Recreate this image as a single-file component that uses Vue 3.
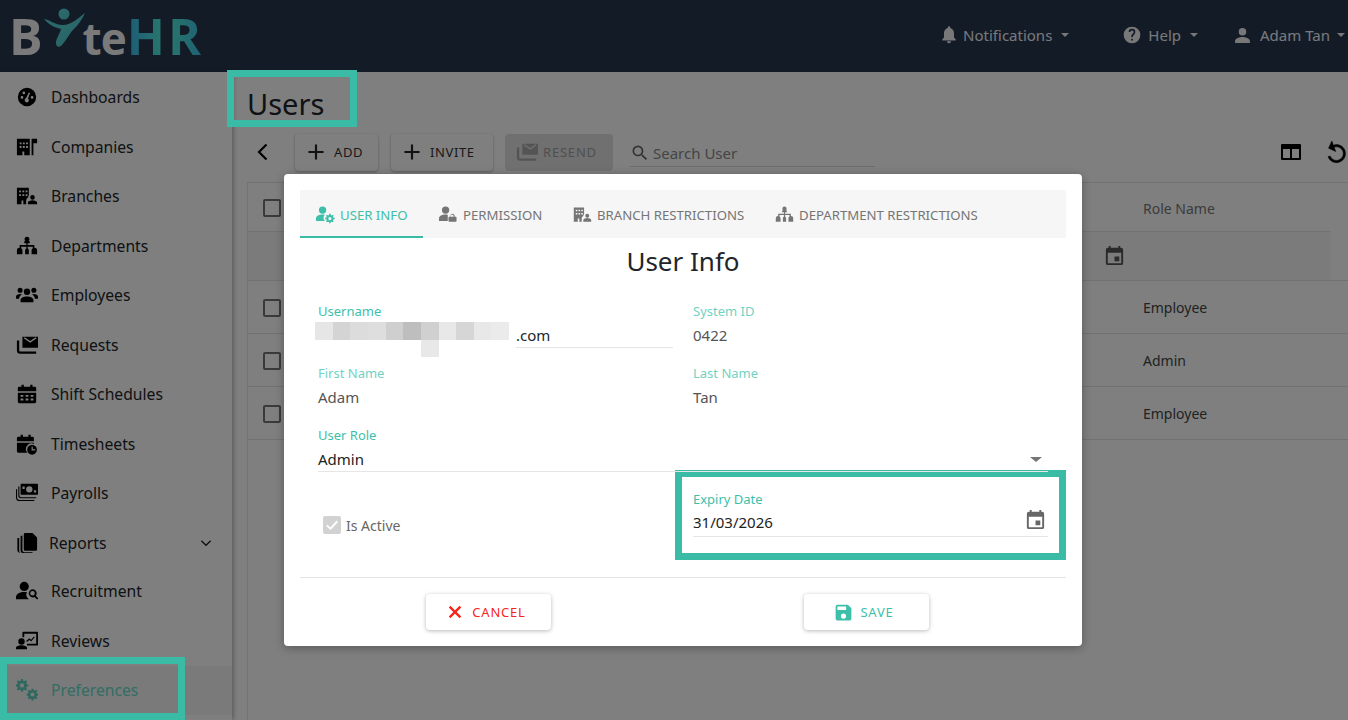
<script setup>
function gear(cx, cy, r, n = 8) {
  const pts = []
  const step = (Math.PI * 2) / n
  for (let i = 0; i < n; i++) {
    const a = i * step
    const list = [
      [a - step * 0.34, r * 0.76], [a - step * 0.18, r], [a + step * 0.18, r], [a + step * 0.34, r * 0.76],
    ]
    for (const [t, d] of list) pts.push(`${(cx + Math.cos(t) * d).toFixed(2)} ${(cy + Math.sin(t) * d).toFixed(2)}`)
  }
  const h = r * 0.34
  return `M${pts.join('L')}zM${cx - h} ${cy}a${h} ${h} 0 1 0 ${2 * h} 0a${h} ${h} 0 1 0 ${-2 * h} 0z`
}
const P = {
  dash: 'M12 2a10 10 0 1 0 0 20 10 10 0 0 0 0-20zM6.500 14a1.500 1.500 0 1 1 0-3 1.500 1.500 0 0 1 0 3zM8.500 9a1.500 1.500 0 1 1 0-3 1.500 1.500 0 0 1 0 3zm3.500 9a2.500 2.500 0 0 1-1-4.800L14 7l1.400.5-2.400 6a2.500 2.500 0 0 1-1 4.500zm5.500-4a1.500 1.500 0 1 1 0-3 1.500 1.500 0 0 1 0 3z',
  company: 'M1 21V3h14v18H9v-4H7v4zm3-14v2h2V7zm3.500 0v2h2V7zm3.500 0v2h2V7zM4 11v2h2v-2zm3.500 0v2h2v-2zm3.500 0v2h2v-2zM17 3h6v5h-4v13h-2z',
  branch: 'M1 21V3h13v8.500a4 4 0 0 0-1 2.500c-1.500.7-2 2-2 4v3H8v-4H6v4zM3.500 6v2h2V6zM7 6v2h2V6zm3.500 0v2h2V6zm-7 4v2h2v-2zM7 10v2h2v-2zm3.500 0v2h2v-2zM18 11a2.500 2.500 0 1 1 0 5 2.500 2.500 0 0 1 0-5zm-5 10v-2c0-1.500 3-2.500 5-2.500s5 1 5 2.500v2z',
  dept: 'M12 2a2.700 2.700 0 0 1 2.700 2.700c0 .9-.4 1.600-1 2.100H15V9h-2.300v2H20v3h.2a2.800 2.800 0 0 1 2.800 2.800V21h-6v-4.200c0-1 .5-1.900 1.300-2.400v-1.700h-5.600v1.700c.8.500 1.300 1.400 1.300 2.400V21H10v-4.200c0-1 .5-1.900 1.300-2.400v-1.700H5.700v1.700c.8.500 1.300 1.400 1.300 2.400V21H1v-4.200A2.800 2.800 0 0 1 3.800 14H4v-3h7.300V9H9V6.800h1.300c-.6-.5-1-1.200-1-2.100A2.700 2.700 0 0 1 12 2z',
  emp: 'M12 5a3.500 3.500 0 1 1 0 7 3.500 3.500 0 0 1 0-7zM4.500 4a2.800 2.800 0 1 1 0 5.600 2.800 2.800 0 0 1 0-5.600zm15 0a2.800 2.800 0 1 1 0 5.600 2.800 2.800 0 0 1 0-5.600zM5 20v-2.500C5 15 8 13.500 12 13.500s7 1.500 7 4V20zM0 16v-2c0-2 2-3 5-3l1.500.5C4.500 12.500 3.500 14 3.500 16zm24 0h-3.500c0-2-1-3.500-3-4.500L19 11c3 0 5 1 5 3z',
  req: 'M7 3h17v12H7zm1.500 1.500 7 5 7-5-1-1-6 4.200-6-4.200zM1 7h2.500v11a1 1 0 0 0 1 1H22v2.500H4.500A3.500 3.500 0 0 1 1 18z',
  cal: 'M6 2h2.500v2h7V2H18v2h2.500A1.500 1.500 0 0 1 22 5.500V9H2V5.500A1.500 1.500 0 0 1 3.500 4H6zM2 10.500h20v10a1.500 1.500 0 0 1-1.500 1.500h-17A1.500 1.500 0 0 1 2 20.500zM5 13v2h3v-2zm5.500 0v2h3v-2zm5.500 0v2h3v-2zM5 17v2h3v-2zm5.500 0v2h3v-2zm5.500 0v2h3v-2z',
  time: 'M5 2h2.500v2h6V2H16v2h2a1.500 1.500 0 0 1 1.500 1.500V9H1V5.500A1.500 1.500 0 0 1 2.500 4H5zM1 10.500h18.500V12a6 6 0 0 0-7 9.500h-10A1.500 1.500 0 0 1 1 20zM17.500 13a5.300 5.300 0 1 1 0 10.600 5.300 5.300 0 0 1 0-10.600zM17 15v4h4v-1.300h-2.700V15z',
  pay: 'M6 2h17a1 1 0 0 1 1 1v10a1 1 0 0 1-1 1H6a1 1 0 0 1-1-1V3a1 1 0 0 1 1-1zm8.500 2.500a3.500 3.500 0 1 0 0 7 3.500 3.500 0 0 0 0-7zM7 5v2.500h2.500V5zm12.500 4v2.500H22V9zM2.500 5h1.200v9.500a2 2 0 0 0 2 2H22v1.300H5.500a3 3 0 0 1-3-3zM0 8h1.200v8.500a3 3 0 0 0 3 3H20v1.300H4a4 4 0 0 1-4-4z',
  rep: 'M10 1h8l5 5v13a1.500 1.500 0 0 1-1.500 1.500H10A1.500 1.500 0 0 1 8.500 19V2.500A1.500 1.500 0 0 1 10 1zM5 4h2v16a2 2 0 0 0 2 2h9v1H7.500A2.500 2.500 0 0 1 5 20.500zM1.500 6.500h2V21a1.500 1.500 0 0 0 1.500 1.500H4A2.500 2.500 0 0 1 1.500 20z',
  rec: 'M9 2a5 5 0 1 1 0 10A5 5 0 0 1 9 2zM0 21v-2.500C0 15 4.500 13 9 13c1 0 2 .1 3 .3a6 6 0 0 0 2 7.700zM18 10a4.500 4.500 0 0 1 3.600 7.200L24.400 20 23 21.400l-2.800-2.800A4.500 4.500 0 1 1 18 10zm0 2a2.500 2.500 0 1 0 0 5 2.500 2.500 0 0 0 0-5z',
  rev: 'M8 2h15a1 1 0 0 1 1 1v13a1 1 0 0 1-1 1H12v-2h10V4H9v4H7V3a1 1 0 0 1 1-1zM6 9a3.500 3.500 0 1 1 0 7 3.500 3.500 0 0 1 0-7zM0 21v-1.500C0 17.500 3 16.500 6 16.500s6 1 6 3V21zm11-9 3.500-3 2 1.500 3-3.500 1 1-4 4.500-2-1.500-2.500 2z',
  gears: gear(6.500, 7, 7) + gear(18, 17, 6.500),
  userGear: 'M9 2a5 5 0 1 1 0 10A5 5 0 0 1 9 2zM0 22v-3.500C0 15 4.500 13 9 13c1 0 2 .1 3 .3a6.500 6.500 0 0 0 .3 8.700z' + gear(19, 18.500, 6.500),
  userLock: 'M9 2a5 5 0 1 1 0 10A5 5 0 0 1 9 2zM0 22v-3.500C0 15 4.500 13 9 13c1 0 2.100.1 3 .3V22zM18 12a3.500 3.500 0 0 1 3.500 3.500V16H23a1 1 0 0 1 1 1v5a1 1 0 0 1-1 1h-9a1 1 0 0 1-1-1v-5a1 1 0 0 1 1-1h1.500v-.5A3.500 3.500 0 0 1 18 12zm0 1.500a2 2 0 0 0-2 2v.5h4v-.5a2 2 0 0 0-2-2z',
  bell: 'M12 22a2.500 2.500 0 0 0 2.500-2.500h-5A2.500 2.500 0 0 0 12 22zm8-5-2-2v-5c0-3-1.600-5.600-4.500-6.300V3a1.500 1.500 0 0 0-3 0v.7C7.600 4.400 6 7 6 10v5l-2 2v1.500h16z',
  help: 'M12 2a10 10 0 1 0 0 20 10 10 0 0 0 0-20zm1 16.500h-2v-2h2zm2-7.500-.9.9c-.7.7-1.100 1.300-1.100 2.600h-2V14c0-1.100.4-2.100 1.100-2.800l1.200-1.300c.4-.3.700-.8.700-1.400a2 2 0 0 0-4 0H8a4 4 0 0 1 8 0c0 .9-.4 1.700-1 2.500z',
  person: 'M12 3.500a4.300 4.300 0 1 1 0 8.600 4.300 4.300 0 0 1 0-8.600zM3.500 20.500v-2.200c0-3 5.700-4.500 8.500-4.500s8.500 1.500 8.500 4.500v2.200z',
  calOut: 'M19 4h-1V2h-2v2H8V2H6v2H5a2 2 0 0 0-2 2v14a2 2 0 0 0 2 2h14a2 2 0 0 0 2-2V6a2 2 0 0 0-2-2zm0 16H5V9h14zm-7-7h5v5h-5z',
  mail: 'M7 3h17v12H7zm1.500 1.500 7 5 7-5-1-1-6 4.200-6-4.200zM1 7h2.500v11a1 1 0 0 0 1 1H22v2.500H4.500A3.500 3.500 0 0 1 1 18z',
  save: 'M17 3H5a2 2 0 0 0-2 2v14a2 2 0 0 0 2 2h14a2 2 0 0 0 2-2V7zm-5 16a3 3 0 1 1 0-6 3 3 0 0 1 0 6zm3-10H5V5h10z',
  cols: 'M3 4h18a1 1 0 0 1 1 1v14a1 1 0 0 1-1 1H3a1 1 0 0 1-1-1V5a1 1 0 0 1 1-1zm1 5v9h7V9zm9 0v9h7V9z',
  undo: 'M12 5V1L7 6l5 5V7c3.310 0 6 2.690 6 6s-2.690 6-6 6-6-2.690-6-6H4c0 4.420 3.580 8 8 8s8-3.580 8-8-3.580-8-8-8z',
  search: 'M15.500 14h-.79l-.28-.27A6.470 6.470 0 0 0 16 9.500 6.500 6.500 0 1 0 9.500 16c1.610 0 3.090-.59 4.230-1.570l.27.28v.79l5 4.990L20.490 19l-4.990-5zm-6 0C7.010 14 5 11.990 5 9.500S7.010 5 9.500 5 14 7.010 14 9.500 11.990 14 9.500 14z',
  plus: 'M19 13h-6v6h-2v-6H5v-2h6V5h2v6h6v2z',
}

const nav = [
  { label: 'Dashboards', icon: P.dash },
  { label: 'Companies', icon: P.company },
  { label: 'Branches', icon: P.branch },
  { label: 'Departments', icon: P.dept },
  { label: 'Employees', icon: P.emp },
  { label: 'Requests', icon: P.req },
  { label: 'Shift Schedules', icon: P.cal },
  { label: 'Timesheets', icon: P.time },
  { label: 'Payrolls', icon: P.pay },
  { label: 'Reports', icon: P.rep, more: true },
  { label: 'Recruitment', icon: P.rec },
  { label: 'Reviews', icon: P.rev },
  { label: 'Preferences', icon: P.gears, active: true },
]
const tabs = [
  { label: 'USER INFO', icon: P.userGear, active: true },
  { label: 'PERMISSION', icon: P.userLock },
  { label: 'BRANCH RESTRICTIONS', icon: P.branch },
  { label: 'DEPARTMENT RESTRICTIONS', icon: P.dept },
]
const rows = ['Employee', 'Admin', 'Employee']
const blur = [
  ['#e6e6e6', 18], ['#d4d4d4', 17], ['#dcdcdc', 18], ['#dedede', 18], ['#cfcfcf', 17],
  ['#bebebe', 18], ['#d0d0d0', 18], ['#e8e8e8', 17], ['#d6d6d6', 18], ['#e8e8e8', 17], ['#ebebeb', 18],
]
</script>

<template>
  <div class="page">
    <header class="top">
      <div class="logo">
        <span class="lg-b">B</span>
        <svg class="lg-y" viewBox="0 0 42 42" width="42" height="42">
          <defs>
            <linearGradient id="lgy" x1="0" y1="0" x2="1" y2="1">
              <stop offset="0" stop-color="#58d8dc" />
              <stop offset="1" stop-color="#50c8c8" />
            </linearGradient>
          </defs>
          <circle cx="20" cy="6" r="5.500" fill="url(#lgy)" />
          <path d="M0 11c6 1 11 6 19 6s14-6 22-12c-4 9-9 14-13 18-4 5-7 11-11 15-3 2-5 0-5-3 0-5 4-9 5-14C12 20 5 17 0 11z" fill="url(#lgy)" />
        </svg>
        <span class="lg-te">te</span>
        <span class="lg-hr">HR</span>
      </div>
      <div class="top-menu">
        <span class="top-item n"><svg viewBox="0 0 24 24" width="20" height="20"><path :d="P.bell" /></svg>Notifications<i class="caret"></i></span>
        <span class="top-item h"><svg viewBox="0 0 24 24" width="20" height="20"><path :d="P.help" /></svg>Help<i class="caret"></i></span>
        <span class="top-item u"><svg viewBox="0 0 24 24" width="21" height="21"><path :d="P.person" /></svg>Adam Tan<i class="caret"></i></span>
      </div>
    </header>

    <div class="body">
      <aside class="side">
        <div v-for="n in nav" :key="n.label" class="nav" :class="{ active: n.active, more: n.more }">
          <svg viewBox="0 0 24 24" width="22" height="22"><path :d="n.icon" /></svg>
          <span>{{ n.label }}</span>
          <svg v-if="n.more" class="chev" viewBox="0 0 24 24" width="16" height="16"><path d="M5 8.500 12 15.500 19 8.500" fill="none" stroke="currentColor" stroke-width="2" /></svg>
        </div>
      </aside>

      <main class="main">
        <h1 class="title">Users</h1>
        <div class="toolbar">
          <svg class="back" viewBox="0 0 24 24" width="24" height="24"><path d="M15.500 4.500 8 12l7.500 7.500" fill="none" stroke="#000" stroke-width="2.200" /></svg>
          <button class="tbtn add"><svg viewBox="0 0 24 24" width="26" height="26"><path :d="P.plus" /></svg>ADD</button>
          <button class="tbtn inv"><svg viewBox="0 0 24 24" width="26" height="26"><path :d="P.plus" /></svg>INVITE</button>
          <button class="tbtn res"><svg viewBox="0 0 24 24" width="22" height="22"><path :d="P.mail" /></svg>RESEND</button>
          <div class="search">
            <svg viewBox="0 0 24 24" width="20" height="20"><path :d="P.search" /></svg>
            <span>Search User</span>
          </div>
          <div class="tools">
            <svg viewBox="0 0 24 24" width="24" height="24"><path :d="P.cols" /></svg>
            <svg viewBox="0 0 24 24" width="27" height="27"><path :d="P.undo" transform="rotate(-20 12 13)" stroke="#000" stroke-width=".4" /></svg>
          </div>
        </div>
        <div class="table">
          <div class="tr th"><i class="cb"></i><span class="role">Role Name</span></div>
          <div class="tr filter">
            <svg viewBox="0 0 24 24" width="23" height="23"><path :d="P.calOut" /></svg>
          </div>
          <div v-for="(r, i) in rows" :key="i" class="tr data"><i class="cb"></i><span class="role">{{ r }}</span></div>
        </div>
      </main>
    </div>

    <div class="overlay"></div>
    <i class="mark mark-title"></i>
    <i class="mark mark-pref"></i>

    <section class="dialog">
      <nav class="tabs">
        <div v-for="t in tabs" :key="t.label" class="tab" :class="{ on: t.active }">
          <svg :viewBox="t.icon === P.branch || t.icon === P.dept ? '0 0 24 24' : '0 0 26 26'" width="19" height="19"><path :d="t.icon" /></svg>
          <span>{{ t.label }}</span>
        </div>
      </nav>
      <h2 class="dtitle">User Info</h2>

      <div class="form">
        <div class="field user">
          <label>Username</label>
          <div class="blur">
            <div class="blur-row"><i v-for="(b, i) in blur" :key="i" class="px" :style="{ background: b[0], width: b[1] + 'px' }"></i></div>
            <i class="blur-drop"></i>
          </div>
          <div class="value line">.com</div>
        </div>
        <div class="field">
          <label>System ID</label>
          <div class="value muted">0422</div>
        </div>
        <div class="field">
          <label>First Name</label>
          <div class="value muted">Adam</div>
        </div>
        <div class="field">
          <label>Last Name</label>
          <div class="value muted">Tan</div>
        </div>
        <div class="field span">
          <label>User Role</label>
          <div class="value line dark">Admin<i class="sel"></i></div>
        </div>
        <div class="active-row">
          <i class="check"><svg viewBox="0 0 24 24" width="18" height="18"><path d="M5 12.500 10 17 19 7" fill="none" stroke="#fff" stroke-width="2.500" /></svg></i>
          <span>Is Active</span>
        </div>
        <div class="expiry">
          <div class="field">
            <label>Expiry Date</label>
            <div class="value line dark">31/03/2026
              <svg viewBox="0 0 24 24" width="23" height="23"><path :d="P.calOut" /></svg>
            </div>
          </div>
        </div>
      </div>

      <footer class="foot">
        <button class="act cancel"><svg viewBox="0 0 24 24" width="20" height="20"><path d="M5.500 5.500l13 13M18.500 5.500l-13 13" stroke="currentColor" stroke-width="2.800" fill="none" /></svg>CANCEL</button>
        <button class="act save"><svg viewBox="0 0 24 24" width="21" height="21"><path :d="P.save" /></svg>SAVE</button>
      </footer>
    </section>
  </div>
</template>

<style>
html, body { margin: 0; background: #fff; overflow: hidden; }
</style>

<style scoped>
* { box-sizing: border-box; }
svg { fill-rule: evenodd; flex: none; }
.page { position: relative; width: 1348px; height: 720px; overflow: hidden; font-family: "Noto Sans", "Open Sans", sans-serif; color: #212529; background: #fff; }
.top { height: 72px; background: #26364e; display: flex; justify-content: space-between; }
.logo { display: flex; align-items: center; padding-left: 9px; height: 72px; font-family: "Open Sans", sans-serif; font-weight: 700; font-size: 50px; line-height: 1; }
.lg-b { color: #f4f4f4; }
.lg-y { margin: -14px -3px 0 1px; }
.lg-te { font-size: 44px; letter-spacing: -1px; color: #f4f4f4; margin-top: 3px; }
.lg-hr { margin-left: 1px; letter-spacing: 3px; background: linear-gradient(90deg, #38b8f0, #54f0d8 50%, #3cc0e8); -webkit-background-clip: text; background-clip: text; color: transparent; }
.top-menu { display: flex; align-items: center; font-size: 15px; color: #eef3f8; padding-bottom: 2px; }
.top-item { display: flex; align-items: center; gap: 3px; }
.top-item svg { fill: #f0f0f0; }
.top-item.n { margin-right: 53px; }
.top-item.n svg { margin-right: 1px; }
.top-item.h { margin-right: 34px; }
.top-item.h svg { margin-right: 3px; }
.top-item.u { margin-right: 3px; gap: 7px; }
.caret { display: inline-block; margin-left: 6px; border-top: 4px solid #eee; border-left: 4px solid transparent; border-right: 4px solid transparent; }
.u .caret { margin-left: 0; }
.body { display: flex; height: 648px; }
.side { width: 232px; padding-top: .5px; flex: none; background: #fff; box-shadow: 2px 0 4px rgba(0,0,0,.25); position: relative; }
.nav { height: 49.500px; display: flex; align-items: center; gap: 13px; padding-left: 16px; font-size: 15.700px; color: #212529; }
.nav svg { fill: #000; }
.nav.more { gap: 11px; height: 48.500px; padding-top: 1px; }
.nav .chev { margin-left: auto; margin-right: 18px; color: #222; fill: none; }
.nav.active { background: #f4f4f4; color: #66dcc8; }
.nav.active svg { fill: #5cd0bc; }
.main { flex: 1; padding-left: 15px; min-width: 0; }
.title { margin: 0; padding-top: 12px; height: 59px; font-size: 29px; line-height: 40px; font-weight: 400; color: #212529; }
.toolbar { display: flex; align-items: center; height: 42px; }
.back { margin-left: 4px; margin-right: 20px; }
.tbtn { display: flex; align-items: center; height: 37px; border: 0; border-radius: 4px; background: #fff; font-family: inherit; font-size: 13px; letter-spacing: .6px; color: #333; box-shadow: 0 1px 3px rgba(0,0,0,.3); padding: 0 0 0 8px; gap: 5px; }
.tbtn svg { fill: #222; }
.tbtn.add { width: 83px; margin-right: 13px; }
.tbtn.inv { width: 102px; margin-right: 12px; }
.tbtn.res { width: 108px; background: #e0e0e0; color: #9e9e9e; box-shadow: none; gap: 5px; padding-left: 11px; letter-spacing: .8px; }
.tbtn.res svg { fill: #a8a8a8; }
.search { display: flex; align-items: center; gap: 3px; width: 245px; height: 28px; margin-left: 17px; border-bottom: 1px solid #d8d8d8; color: #8a8a8a; font-size: 15px; margin-top: 2px; }
.search svg { fill: #666; }
.tools { display: flex; align-items: center; gap: 20px; margin-left: auto; margin-right: -1.500px; }
.tools svg { fill: #000; }
.table { margin-top: 9px; border-left: 1px solid #e6e6e6; height: 538px; }
.tr { position: relative; border-top: 1px solid #e4e4e4; }
.th { height: 49px; }
.filter { height: 49px; width: 1083px; background: #f6f6f6; }
.filter svg { position: absolute; left: 855px; top: 12px; fill: #555; }
.data { height: 53px; }
.data:last-child { height: 54px; border-bottom: 1px solid #e4e4e4; }
.cb { position: absolute; left: 15px; top: 17px; width: 18px; height: 18px; border: 2px solid #757575; border-radius: 2px; }
.data .cb { top: 18px; }
.th .cb { top: 16px; }
.role { position: absolute; left: 895px; top: 16px; font-size: 14px; line-height: 20px; color: #444; }
.data .role { top: 17px; }
.th .role { color: #777; }
.overlay { position: absolute; inset: 0; background: rgba(0,0,0,.5); }
.mark { position: absolute; border: 7px solid #3abba6; display: block; }
.mark-title { left: 227px; top: 70px; width: 130px; height: 57px; }
.mark-pref { left: 0; top: 657px; width: 185px; height: 63px; }
.dialog { position: absolute; left: 284px; top: 174px; width: 798px; height: 472px; background: #fff; border-radius: 4px; padding: 16px 16px 0; box-shadow: 0 2px 10px rgba(0,0,0,.3); }
.tabs { display: flex; height: 48px; background: #f6f6f6; }
.tab { display: flex; align-items: center; gap: 5px; padding: 1px 0 0 16px; font-size: 13.200px; color: #757575; height: 48px; white-space: nowrap; flex: none; }
.tab svg { fill: #757575; }
.tab.on { color: #3dbfaa; border-bottom: 2px solid #3abba6; width: 123px; padding-top: 3px; }
.tab.on svg { fill: #3dbfaa; }
.tab:nth-child(2) { width: 134px; }
.tab:nth-child(3) { width: 202px; }
.dtitle { margin: 0; height: 48px; padding-top: 4px; text-align: center; font-size: 26px; line-height: 38px; font-weight: 400; color: #212529; }
.form { display: grid; grid-template-columns: 355px 355px; column-gap: 20px; padding: 0 18px; grid-auto-rows: 62px; margin-top: 2px; }
.field { position: relative; padding-top: 14px; }
label { display: block; height: 19px; font-size: 13px; line-height: 18px; color: #3dbfaa; }
.field:nth-child(2) label, .field:nth-child(3) label, .field:nth-child(4) label { color: #72d2c3; }
.value { position: relative; height: 27px; font-size: 15px; line-height: 28px; color: #212529; }
.muted { color: #555; }
.line { border-bottom: 1px solid #e6e6e6; }
.dark { color: #222; }
.user .value { margin-left: 198px; }
.blur { position: absolute; left: -3px; top: 34px; }
.blur-row { display: flex; height: 18px; }
.px { display: block; height: 18px; }
.blur-drop { position: absolute; left: 106px; top: 18px; width: 18px; height: 17px; background: #e8e8e8; }
.span { grid-column: 1 / -1; }
.sel { position: absolute; right: 6px; top: 12px; border-top: 5px solid #757575; border-left: 6px solid transparent; border-right: 6px solid transparent; }
.active-row { display: flex; align-items: center; gap: 5px; padding-left: 5px; height: 110px; margin-top: -4px; font-size: 14px; color: #666; }
.check { display: flex; align-items: center; justify-content: center; width: 18px; height: 18px; border-radius: 2px; background: #d2d2d2; }
.expiry { height: 90px; margin-top: -4px; margin-left: -18px; border: 7px solid #3abba6; padding: 5px 11px 0; width: 391px; background: #fff; }
.expiry .field { padding-top: 8px; }
.expiry label { height: 18px; }
.expiry .value { height: 29px; }
.expiry .value svg { position: absolute; right: 1px; top: 0; fill: #666; }
.foot { display: flex; position: absolute; left: 16px; right: 16px; top: 403px; height: 69px; border-top: 1px solid #e4e4e4; padding: 16px 0 0 126px; }
.act { width: 125px; height: 36px; display: flex; align-items: center; justify-content: center; gap: 7px; border: 0; border-radius: 4px; padding: 0 6px 0 0; background: #fff; box-shadow: 0 1px 4px rgba(0,0,0,.28); font-family: inherit; font-size: 13px; letter-spacing: .8px; }
.save { margin-left: 253px; }
.cancel { color: #f4261f; }
.save { color: #3dbfaa; gap: 6px; }
.save svg { fill: #3dbfaa; }
</style>
